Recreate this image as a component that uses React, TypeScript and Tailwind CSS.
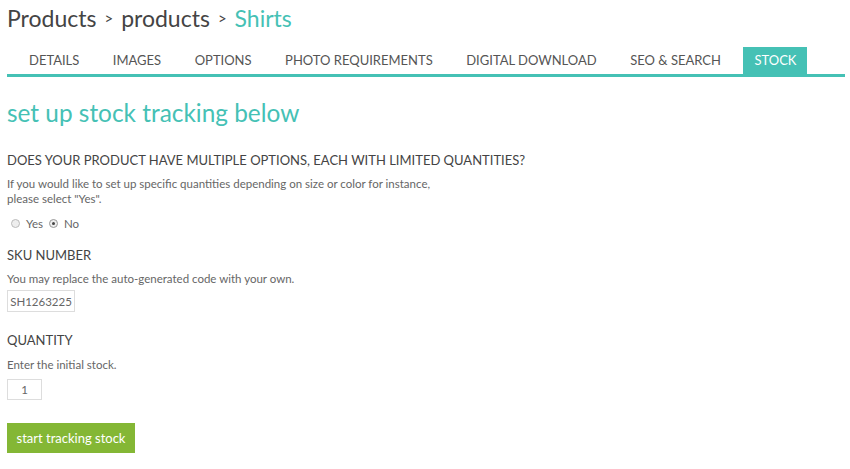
import React from "react";

const tabs = ["DETAILS", "IMAGES", "OPTIONS", "PHOTO REQUIREMENTS", "DIGITAL DOWNLOAD", "SEO & SEARCH", "STOCK"];

export default function App() {
  return (
    <div className="min-h-[469px] w-[850px] bg-white px-[7px] text-[#555]" style={{ fontFamily: "Lato, 'Open Sans', sans-serif" }}>
      <h1 className="pt-[3px] text-[23px] leading-[30px] text-[#444]">
        Products<span className="mx-[8px] text-[15px] align-[3px]">&gt;</span>products
        <span className="mx-[8px] text-[15px] align-[3px]">&gt;</span><span className="text-[#45c1b5]">Shirts</span>
      </h1>
      <nav className="mt-[14px] flex h-[30px] w-[838px] items-end gap-[11.5px] border-b-[3px] border-[#45c1b5] pl-[11px]">
        {tabs.map((t) => (
          <div
            key={t}
            className={
              t === "STOCK"
                ? "flex h-[27px] items-center bg-[#45c1b5] px-[11px] text-[13px] text-white"
                : "flex h-[27px] items-center px-[11px] text-[13px] text-[#555]"
            }
          >
            {t}
          </div>
        ))}
      </nav>
      <h2 className="mt-[21px] text-[24.4px] leading-[30px] text-[#45c1b5]">set up stock tracking below</h2>
      <div className="mt-[23px] text-[13px] leading-[18px] text-[#444]">DOES YOUR PRODUCT HAVE MULTIPLE OPTIONS, EACH WITH LIMITED QUANTITIES?</div>
      <p className="mt-[7px] text-[11.5px] leading-[15px] text-[#666]">
        If you would like to set up specific quantities depending on size or color for instance,
        <br />
        please select "Yes".
      </p>
      <div className="mt-[9px] flex items-center pl-[4px] text-[11.5px] text-[#666]">
        <span className="mr-[6px] inline-block h-[9px] w-[9px] rounded-full border border-[#bbb] bg-[#eee]" />
        <span>Yes</span>
        <span className="ml-[6px] mr-[6px] flex h-[9px] w-[9px] items-center justify-center rounded-full border border-[#999] bg-[#eee]">
          <span className="h-[3px] w-[3px] rounded-full bg-[#444]" />
        </span>
        <span>No</span>
      </div>
      <div className="mt-[14px] text-[13px] leading-[18px] text-[#444]">SKU NUMBER</div>
      <p className="mt-[7px] text-[11.5px] leading-[15px] text-[#666]">You may replace the auto-generated code with your own.</p>
      <div className="mt-[4px] flex h-[22px] w-[68px] items-center justify-center border border-[#ddd] text-[11.5px] text-[#666]">SH1263225</div>
      <div className="mt-[19px] text-[13px] leading-[18px] text-[#444]">QUANTITY</div>
      <p className="mt-[8px] text-[11.5px] leading-[15px] text-[#666]">Enter the initial stock.</p>
      <div className="mt-[7px] flex h-[21px] w-[35px] items-center justify-center border border-[#ddd] text-[11.5px] text-[#666]">1</div>
      <button className="mt-[23px] flex h-[30px] w-[128px] items-center justify-center bg-[#84b735] text-[13px] text-white">start tracking stock</button>
    </div>
  );
}
